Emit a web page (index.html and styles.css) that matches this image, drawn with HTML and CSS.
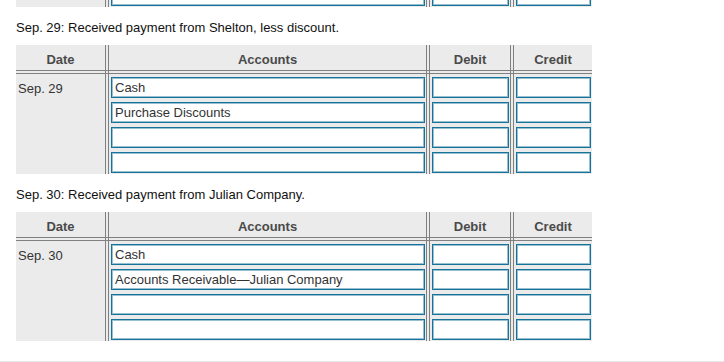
FILE: index.html
```html
<!DOCTYPE html>
<html lang="en">
<head>
  <meta charset="UTF-8">
  <meta name="viewport" content="width=device-width, initial-scale=1.0">
  <title>Journal Entries</title>
  <link rel="stylesheet" href="styles.css">
</head>
<body>
  <div class="page">
    <!-- last rows of the previous entry -->
    <div class="tail-wrap">
      <div class="ledger tail">
        <div class="sep sep-1"></div>
        <div class="sep sep-2"></div>
        <div class="sep sep-3"></div>
        <div class="cell-date"></div>
        <div class="entry col-account"><input type="text"></div>
        <div class="entry col-debit"><input type="text"></div>
        <div class="entry col-credit"><input type="text"></div>
      </div>
    </div>

    <p class="prompt">Sep. 29: Received payment from Shelton, less discount.</p>
    <div class="ledger">
      <div class="head col-date">Date</div>
      <div class="head col-account">Accounts</div>
      <div class="head col-debit">Debit</div>
      <div class="head col-credit">Credit</div>
      <div class="rule"></div>
      <div class="sep sep-1"></div>
      <div class="sep sep-2"></div>
      <div class="sep sep-3"></div>
      <div class="cell-date">Sep. 29</div>
      <div class="entry col-account">
        <input type="text" value="Cash">
        <input type="text" value="Purchase Discounts">
        <input type="text">
        <input type="text">
      </div>
      <div class="entry col-debit">
        <input type="text"><input type="text"><input type="text"><input type="text">
      </div>
      <div class="entry col-credit">
        <input type="text"><input type="text"><input type="text"><input type="text">
      </div>
    </div>

    <p class="prompt">Sep. 30: Received payment from Julian Company.</p>
    <div class="ledger">
      <div class="head col-date">Date</div>
      <div class="head col-account">Accounts</div>
      <div class="head col-debit">Debit</div>
      <div class="head col-credit">Credit</div>
      <div class="rule"></div>
      <div class="sep sep-1"></div>
      <div class="sep sep-2"></div>
      <div class="sep sep-3"></div>
      <div class="cell-date">Sep. 30</div>
      <div class="entry col-account">
        <input type="text" value="Cash">
        <input type="text" value="Accounts Receivable—Julian Company">
        <input type="text">
        <input type="text">
      </div>
      <div class="entry col-debit">
        <input type="text"><input type="text"><input type="text"><input type="text">
      </div>
      <div class="entry col-credit">
        <input type="text"><input type="text"><input type="text"><input type="text">
      </div>
    </div>
  </div>
  <div class="divider"></div>
</body>
</html>
```

FILE: styles.css
```css
/* Journal entry tables */
body {
  margin: 0;
  font-family: "Liberation Sans", Arial, sans-serif;
  font-size: 13px;
  color: #111;
  background-color: #fff;
}

.page {
  padding-left: 16px;
}

.tail-wrap {
  height: 7px;
  overflow: hidden;
  display: flex;
  flex-direction: column;
  justify-content: flex-end;
}

.prompt {
  margin: 13px 0 10px;
  line-height: 15px;
}

.ledger {
  display: grid;
  grid-template-columns: 89px 4px 317px 4px 80px 4px 78px;
  grid-template-rows: 25px 4px 100px;
  width: 576px;
  background-color: #ebebeb;
}

.ledger.tail {
  grid-template-rows: 0 0 auto;
}

/* double rules between columns and under the header */
.sep {
  grid-row: 1 / -1;
  border-left: 1px solid #808080;
  border-right: 1px solid #808080;
}

.sep-1 { grid-column: 2; }
.sep-2 { grid-column: 4; }
.sep-3 { grid-column: 6; }

.rule {
  grid-row: 2;
  grid-column: 1 / -1;
  border-top: 1px solid #808080;
  border-bottom: 1px solid #808080;
}

.head {
  grid-row: 1;
  padding-top: 7px;
  line-height: 15px;
  text-align: center;
  font-weight: bold;
  color: #4a4a4a;
}

.col-date { grid-column: 1; }
.col-account { grid-column: 3; }
.col-debit { grid-column: 5; }
.col-credit { grid-column: 7; }

.cell-date {
  grid-row: 3;
  grid-column: 1;
  padding: 7px 2px;
  line-height: 15px;
  color: #333;
}

.entry {
  grid-row: 3;
  display: flex;
  flex-direction: column;
  gap: 4px;
  padding: 3px 1px 1px 2px;
}

.entry input {
  box-sizing: border-box;
  width: 100%;
  height: 21px;
  margin: 0;
  padding: 0 3px;
  border: 1px solid #17739a;
  border-radius: 0;
  box-shadow: inset 0 0 0 1px rgba(23, 115, 154, 0.45);
  background-color: #fff;
  font-family: "Liberation Sans", Arial, sans-serif;
  font-size: 13px;
  color: #333;
  outline: none;
}

.divider {
  margin-top: 20px;
  border-top: 1px solid #e8e8e8;
}
```
